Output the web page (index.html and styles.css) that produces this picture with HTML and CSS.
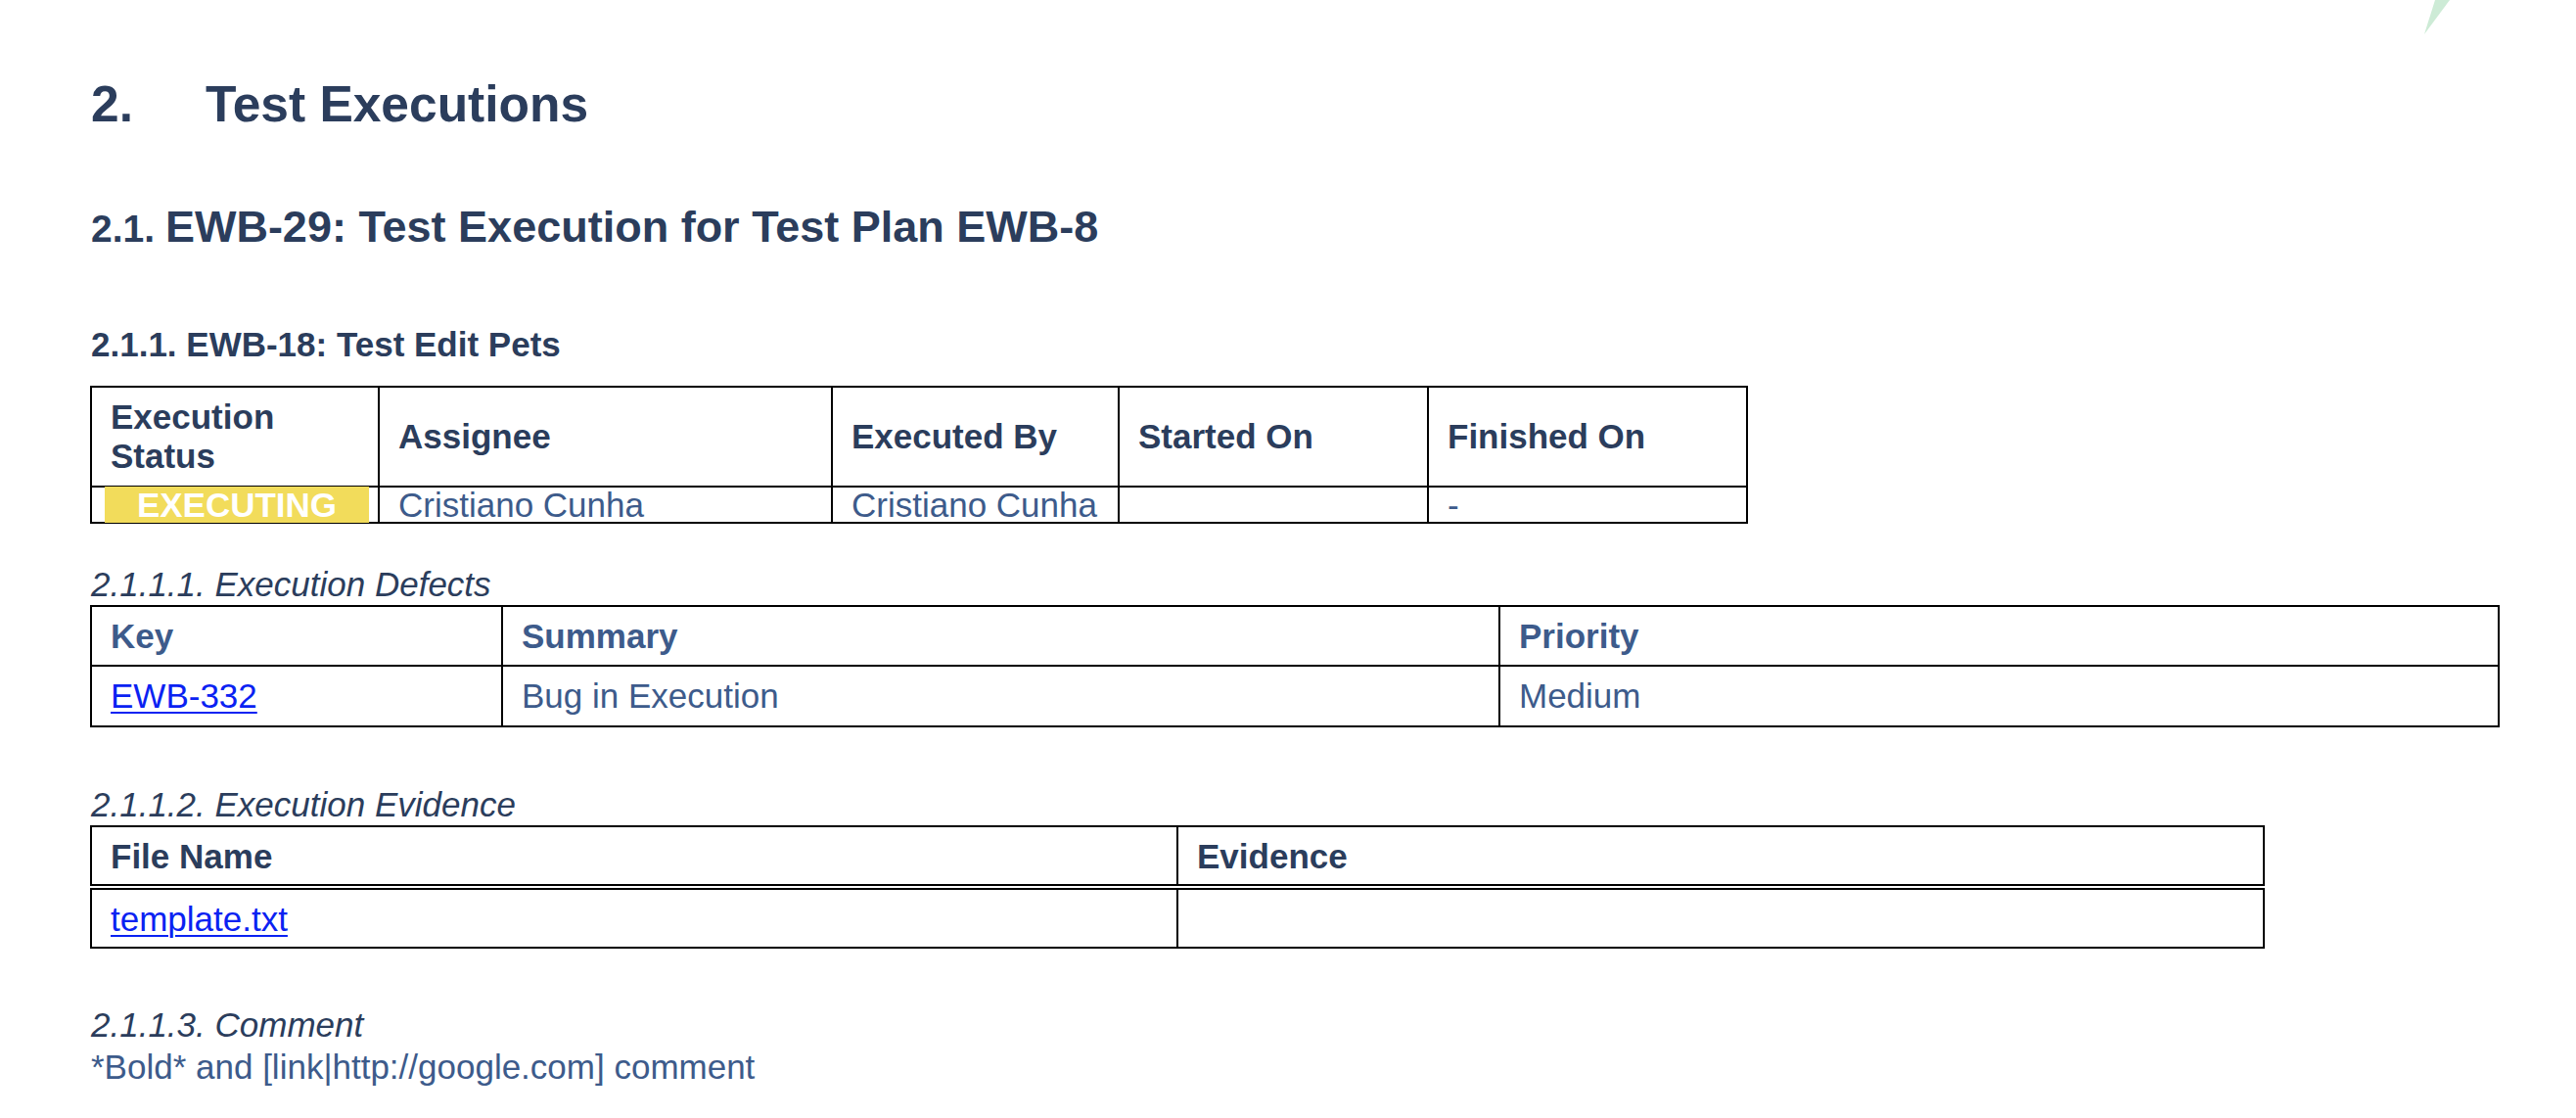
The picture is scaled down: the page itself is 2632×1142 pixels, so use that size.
FILE: index.html
```html
<!DOCTYPE html>
<html lang="en">
<head>
<meta charset="utf-8">
<title>Test Executions</title>
<link rel="stylesheet" href="styles.css">
</head>
<body>
<div class="leaf" aria-hidden="true">
  <svg width="30" height="36" viewBox="0 0 30 36"><polygon points="11,0 26,0 0,35" fill="#cdebd6"/></svg>
</div>
<main class="doc">
  <h1 class="h1"><span class="num">2.</span>Test Executions</h1>
  <h2 class="h2"><span class="num">2.1. </span>EWB-29: Test Execution for Test Plan EWB-8</h2>
  <h3 class="h3">2.1.1. EWB-18: Test Edit Pets</h3>

  <table class="grid grid-exec">
    <colgroup>
      <col class="c294"><col class="c463"><col class="c293"><col class="c316"><col class="c326">
    </colgroup>
    <thead>
      <tr><th>Execution Status</th><th>Assignee</th><th>Executed By</th><th>Started On</th><th>Finished On</th></tr>
    </thead>
    <tbody>
      <tr>
        <td class="status-cell"><span class="badge">EXECUTING</span></td>
        <td>Cristiano Cunha</td>
        <td>Cristiano Cunha</td>
        <td></td>
        <td>-</td>
      </tr>
    </tbody>
  </table>

  <h4 class="h4 h4-defects">2.1.1.1. Execution Defects</h4>
  <table class="grid grid-defects">
    <colgroup><col class="c420"><col class="c1019"><col class="c1021"></colgroup>
    <thead>
      <tr><th>Key</th><th>Summary</th><th>Priority</th></tr>
    </thead>
    <tbody>
      <tr><td><a href="#" class="link">EWB-332</a></td><td>Bug in Execution</td><td>Medium</td></tr>
    </tbody>
  </table>

  <h4 class="h4 h4-evidence">2.1.1.2. Execution Evidence</h4>
  <div class="evidence">
    <table class="box">
      <colgroup><col class="c1110"><col class="c1110"></colgroup>
      <thead><tr><th>File Name</th><th>Evidence</th></tr></thead>
    </table>
    <table class="box box-body">
      <colgroup><col class="c1110"><col class="c1110"></colgroup>
      <tbody><tr><td><a href="#" class="link">template.txt</a></td><td></td></tr></tbody>
    </table>
  </div>

  <h4 class="h4 h4-comment">2.1.1.3. Comment</h4>
  <p class="comment">*Bold* and [link|http://google.com] comment</p>
</main>
</body>
</html>
```

FILE: styles.css
```css
html, body {
  margin: 0;
  padding: 0;
  background: #ffffff;
}

body {
  font-family: "Liberation Sans", Arial, sans-serif;
  color: #2b3d5c;
  position: relative;
  min-height: 1142px;
}

.leaf {
  position: absolute;
  left: 2477px;
  top: 0;
  line-height: 0;
}

.doc {
  padding: 76px 0 0 92px;
}

.h1 {
  margin: 0 0 0 1px;
  font-size: 51.5px;
  line-height: 60px;
  font-weight: 700;
}

.h1 .num {
  display: inline-block;
  width: 117px;
}

.h2 {
  margin: 70px 0 0 1px;
  font-size: 45px;
  line-height: 52px;
  font-weight: 700;
}

.h2 .num {
  font-size: 39px;
}

.h3 {
  margin: 72px 0 0 1px;
  font-size: 35px;
  line-height: 40px;
  font-weight: 700;
}

.h4 {
  margin: 0 0 0 1px;
  font-size: 35px;
  line-height: 40px;
  font-weight: 400;
  font-style: italic;
}

.h4-defects { margin-top: 42px; }
.h4-evidence { margin-top: 59px; }
.h4-comment { margin-top: 58px; }

.grid,
.box {
  border-collapse: separate;
  border-spacing: 0;
  table-layout: fixed;
  font-size: 35px;
  border-top: 2px solid #000;
  border-left: 2px solid #000;
}

.grid th,
.grid td,
.box th,
.box td {
  border-right: 2px solid #000;
  border-bottom: 2px solid #000;
  text-align: left;
  padding: 10px 19px;
  line-height: 40px;
}

.grid th,
.box th {
  font-weight: 700;
  color: #2b3d5c;
}

.grid td,
.box td {
  font-weight: 400;
  color: #3d5b8b;
}

/* Execution table */
.grid-exec {
  width: 1694px;
  margin-top: 22px;
}

.grid-exec th {
  vertical-align: middle;
  padding: 10px 19px;
}

.grid-exec td {
  padding: 0 19px;
  line-height: 35px;
  height: 35px;
  white-space: nowrap;
}

.grid-exec td.status-cell {
  padding: 0 9px 0 13px;
}

.badge {
  display: block;
  margin: -1px 0;
  height: 37px;
  line-height: 37px;
  background: #f2dc5b;
  color: #ffffff;
  font-weight: 700;
  text-align: center;
}

.c294 { width: 294px; }
.c463 { width: 463px; }
.c293 { width: 293px; }
.c316 { width: 316px; }
.c326 { width: 326px; }

/* Defects table */
.grid-defects {
  width: 2462px;
  margin-top: 1px;
}

.grid-defects th {
  color: #3d5b8b;
  padding: 10px 19px 9px;
}

.c420 { width: 420px; }
.c1019 { width: 1019px; }
.c1021 { width: 1021px; }

/* Evidence */
.evidence {
  margin-top: 1px;
}

.box {
  width: 2222px;
}

.box th,
.box td {
  padding: 10px 19px 8px;
}

.box-body {
  margin-top: 2px;
}

.c1110 { width: 1110px; }

.link {
  color: #0a22f2;
  text-decoration: underline;
  text-underline-offset: 4px;
  text-decoration-thickness: 2px;
}

.comment {
  margin: 3px 0 0 1px;
  font-size: 35px;
  line-height: 40px;
  color: #3d5b8b;
}
```
